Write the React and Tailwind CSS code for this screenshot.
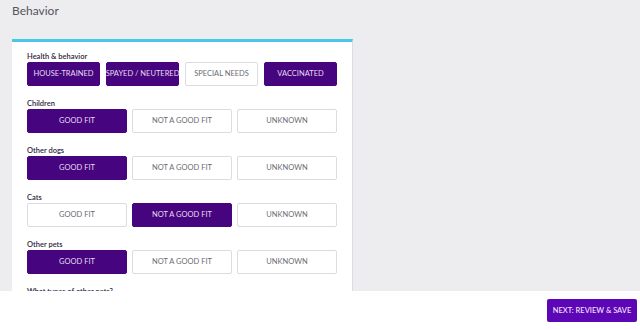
const sections = [
  { label: "Children", options: ["GOOD FIT", "NOT A GOOD FIT", "UNKNOWN"], selected: [0] },
  { label: "Other dogs", options: ["GOOD FIT", "NOT A GOOD FIT", "UNKNOWN"], selected: [0] },
  { label: "Cats", options: ["GOOD FIT", "NOT A GOOD FIT", "UNKNOWN"], selected: [1] },
  { label: "Other pets", options: ["GOOD FIT", "NOT A GOOD FIT", "UNKNOWN"], selected: [0] },
];

const health = {
  label: "Health & behavior",
  options: ["HOUSE-TRAINED", "SPAYED / NEUTERED", "SPECIAL NEEDS", "VACCINATED"],
  selected: [0, 1, 3],
};

const Choice = ({ text, active }) => (
  <button
    className={`h-[24px] rounded-[2px] text-[7.5px] leading-none whitespace-nowrap flex items-center justify-center ${
      active
        ? "bg-[#46047e] text-[#e6dcf2] border border-[#46047e]"
        : "bg-white text-[#6b6b73] border border-[#dcdce0]"
    }`}
  >
    {text}
  </button>
);

const Section = ({ label, options, selected, cols }) => (
  <div className="mb-[13px]">
    <div className="h-[10px] text-[7.5px] leading-[10px] font-semibold text-[#2e2540]">{label}</div>
    <div className={`grid ${cols === 4 ? "grid-cols-4 gap-[6px]" : "grid-cols-3 gap-[5px]"}`}>
      {options.map((o, i) => (
        <Choice key={o} text={o} active={selected.includes(i)} />
      ))}
    </div>
  </div>
);

export default function App() {
  return (
    <div
      className="w-[640px] h-[330px] bg-[#ededf0] flex flex-col overflow-hidden"
      style={{ fontFamily: "Lato, 'Noto Sans', sans-serif" }}
    >
      <div className="flex-1 overflow-hidden px-[12px]">
        <h1 className="pt-[3px] text-[12px] leading-[16px] text-[#55555c] mb-[20px]">Behavior</h1>

        <div className="w-[341px] bg-white border-t-[3px] border-[#48c8e6] border-r border-r-[#dcdce2] px-[15px] pt-[10px]">
          <Section {...health} cols={4} />
          {sections.map((s) => (
            <Section key={s.label} {...s} cols={3} />
          ))}
          <div className="h-[10px] text-[7.5px] leading-[10px] font-semibold text-[#2e2540]">
            What types of other pets?
          </div>
        </div>
      </div>

      <div className="h-[39px] bg-white flex items-center justify-end pr-[3px] shrink-0">
        <button className="w-[90px] h-[23px] rounded-[2px] bg-[#5d06b6] text-[#ecdff8] text-[7.5px] font-semibold whitespace-nowrap">
          NEXT: REVIEW &amp; SAVE
        </button>
      </div>
    </div>
  );
}
